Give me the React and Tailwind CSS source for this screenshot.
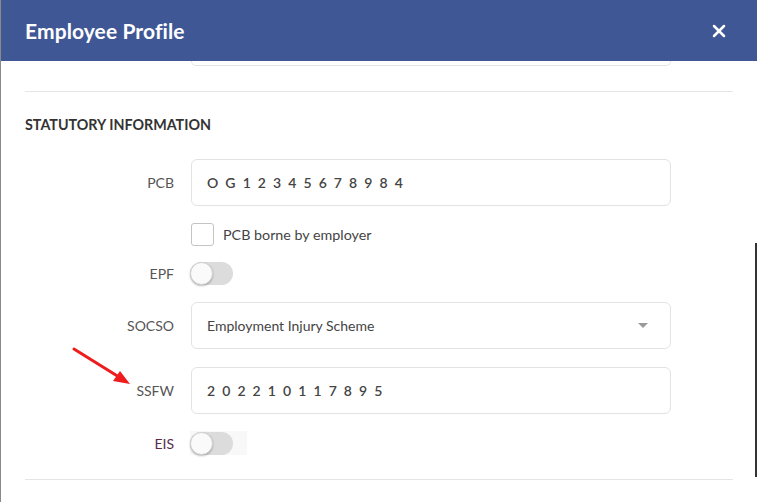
import { X } from "lucide-react"

function Label({ children, className = "" }) {
    return (
        <div className={`w-[150px] text-right text-[14px] pr-[1px] ${className}`}>
            {children}
        </div>
    )
}

function Toggle({ boxed }) {
    return (
        <div className={`flex items-center h-[24px] ${boxed ? "bg-[#f8f8f8] w-[57px]" : ""}`}>
            <div className="relative w-[43px] h-[23px] rounded-full bg-[#dcdcdc]">
                <div className="absolute left-0 top-0 w-[23px] h-[23px] rounded-full bg-[#fafafa] border border-[#d0d0d0] shadow-[0_1px_2px_rgba(0,0,0,0.25)]"></div>
            </div>
        </div>
    )
}

export default function App() {
    const box = "w-[480px] h-[47px] rounded-[6px] border border-[#e3e3e3] bg-white flex items-center px-[15px]"
    const spaced = "font-['Lato',sans-serif] font-semibold text-[14px] tracking-[1.8px] text-[#444]"

    return (
        <div className="relative w-[757px] h-[502px] overflow-hidden bg-white border-l border-[#8a8a8a] font-['Lato','Noto_Sans',sans-serif] text-[#555]">
            <div className="h-[61px] bg-[#3f5895] flex items-center justify-between pl-[24px] pr-[28px]">
                <h1 className="text-white font-bold text-[21px] tracking-[0.1px]">Employee Profile</h1>
                <X className="text-white" size={20} strokeWidth={3} />
            </div>

            <div className="ml-[190px] w-[480px] h-[5px] rounded-b-[6px] border-x border-b border-[#e3e3e3]"></div>

            <div className="mx-[24px] mt-[25px] border-t border-[#e5e5e5]"></div>

            <div className="px-[24px]">
                <h2 className="mt-[24px] h-[18px] flex items-center font-bold text-[14.3px] text-[#333]">
                    STATUTORY INFORMATION
                </h2>

                <div className="mt-[25px] flex items-center gap-[16px]">
                    <Label>PCB</Label>
                    <div className={box}>
                        <span className={spaced}>O G 1 2 3 4 5 6 7 8 9 8 4</span>
                    </div>
                </div>

                <div className="mt-[17px] flex items-center gap-[16px]">
                    <div className="w-[150px]"></div>
                    <div className="flex items-center gap-[9px]">
                        <div className="w-[23px] h-[23px] rounded-[3px] border border-[#c4c4c4] bg-white"></div>
                        <span className="text-[14.3px] text-[#444]">PCB borne by employer</span>
                    </div>
                </div>

                <div className="mt-[15px] flex items-center gap-[15px]">
                    <Label>EPF</Label>
                    <Toggle />
                </div>

                <div className="mt-[17px] flex items-center gap-[16px]">
                    <Label>SOCSO</Label>
                    <div className={`${box} justify-between`}>
                        <span className="text-[14px] text-[#444]">Employment Injury Scheme</span>
                        <span className="mr-[7px] w-0 h-0 border-x-[5px] border-x-transparent border-t-[5px] border-t-[#9a9a9a]"></span>
                    </div>
                </div>

                <div className="mt-[18px] flex items-center gap-[16px]">
                    <Label>SSFW</Label>
                    <div className={box}>
                        <span className={spaced}>2 0 2 2 1 0 1 1 7 8 9 5</span>
                    </div>
                </div>

                <div className="mt-[17px] flex items-center gap-[15px]">
                    <Label className="text-[#5a2a48]">EIS</Label>
                    <Toggle boxed />
                </div>
            </div>

            <div className="mx-[24px] mt-[24px] border-t border-[#e5e5e5]"></div>

            <div className="absolute right-0 top-[243px] w-[2px] h-[234px] bg-[#333]"></div>

            <svg className="absolute left-0 top-0" width="757" height="502">
                <line x1="73" y1="349" x2="118" y2="377" stroke="#ee1c1c" strokeWidth="3" strokeLinecap="round" />
                <polygon points="129,384 112,381 119,371" fill="#ee1c1c" />
            </svg>
        </div>
    )
}
